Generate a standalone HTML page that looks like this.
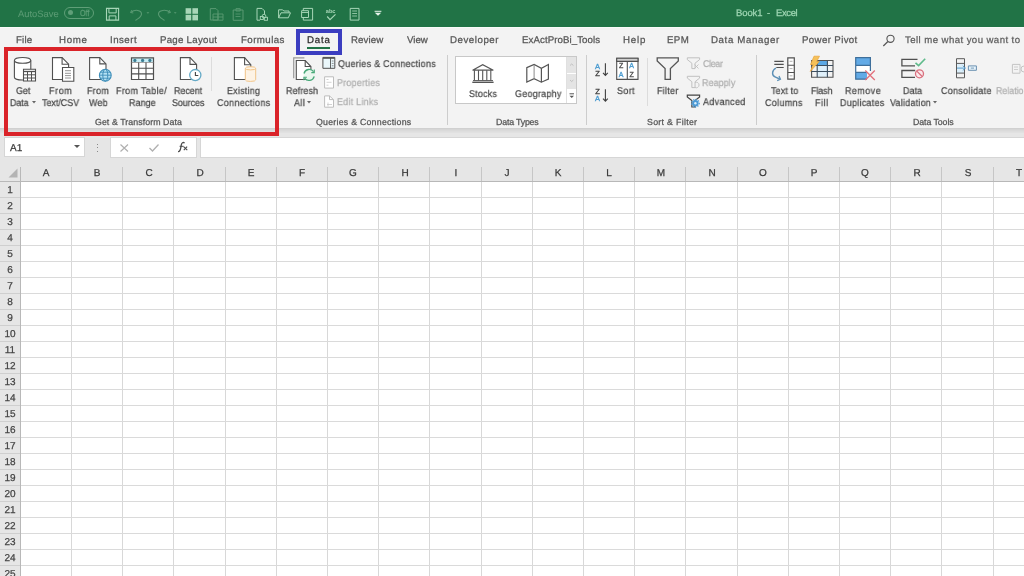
<!DOCTYPE html>
<html><head><meta charset="utf-8"><style>
html,body{margin:0;padding:0;}
body{width:1024px;height:576px;overflow:hidden;position:relative;background:#fff;font-family:"Liberation Sans", sans-serif;}
.t{position:absolute;white-space:nowrap;line-height:1;will-change:transform;text-rendering:geometricPrecision;-webkit-text-stroke:0.25px currentColor;}
.r{position:absolute;}
svg.r{overflow:visible;}
.dd{display:inline-block;width:0;height:0;border-left:2px solid transparent;border-right:2px solid transparent;border-top:2.5px solid #666;vertical-align:2px;}
</style></head><body>
<div class="r" style="left:0px;top:0px;width:1024px;height:27px;background:#217346;"></div>
<div class="r" style="left:0px;top:27px;width:1024px;height:101px;background:#f3f3f3;"></div>
<div class="r" style="left:0px;top:27px;width:1024px;height:1px;background:#f7fbf8;"></div>
<div class="r" style="left:0px;top:131px;width:1024px;height:50px;background:#e6e6e6;"></div>
<div class="r" style="left:0px;top:128px;width:1024px;height:1px;background:#d0d0d0;"></div>
<div class="r" style="left:0px;top:129px;width:1024px;height:1px;background:#d6d6d6;"></div>
<div class="r" style="left:0px;top:130px;width:1024px;height:1px;background:#dadada;"></div>
<div class="r" style="left:0px;top:131px;width:1024px;height:1px;background:#dedede;"></div>
<div class="r" style="left:0px;top:132px;width:1024px;height:1px;background:#e1e1e1;"></div>
<div class="r" style="left:20px;top:181px;width:1004px;height:395px;background:#ffffff;"></div>
<div class="r" style="left:0px;top:181px;width:20px;height:395px;background:#e6e6e6;"></div>
<div class="r" style="left:71px;top:167px;width:1px;height:14px;background:#c6c6c6;"></div>
<div class="r" style="left:71px;top:181px;width:1px;height:395px;background:#d8d8d8;"></div>
<div class="r" style="left:122px;top:167px;width:1px;height:14px;background:#c6c6c6;"></div>
<div class="r" style="left:122px;top:181px;width:1px;height:395px;background:#d8d8d8;"></div>
<div class="r" style="left:173px;top:167px;width:1px;height:14px;background:#c6c6c6;"></div>
<div class="r" style="left:173px;top:181px;width:1px;height:395px;background:#d8d8d8;"></div>
<div class="r" style="left:225px;top:167px;width:1px;height:14px;background:#c6c6c6;"></div>
<div class="r" style="left:225px;top:181px;width:1px;height:395px;background:#d8d8d8;"></div>
<div class="r" style="left:276px;top:167px;width:1px;height:14px;background:#c6c6c6;"></div>
<div class="r" style="left:276px;top:181px;width:1px;height:395px;background:#d8d8d8;"></div>
<div class="r" style="left:327px;top:167px;width:1px;height:14px;background:#c6c6c6;"></div>
<div class="r" style="left:327px;top:181px;width:1px;height:395px;background:#d8d8d8;"></div>
<div class="r" style="left:378px;top:167px;width:1px;height:14px;background:#c6c6c6;"></div>
<div class="r" style="left:378px;top:181px;width:1px;height:395px;background:#d8d8d8;"></div>
<div class="r" style="left:429px;top:167px;width:1px;height:14px;background:#c6c6c6;"></div>
<div class="r" style="left:429px;top:181px;width:1px;height:395px;background:#d8d8d8;"></div>
<div class="r" style="left:481px;top:167px;width:1px;height:14px;background:#c6c6c6;"></div>
<div class="r" style="left:481px;top:181px;width:1px;height:395px;background:#d8d8d8;"></div>
<div class="r" style="left:532px;top:167px;width:1px;height:14px;background:#c6c6c6;"></div>
<div class="r" style="left:532px;top:181px;width:1px;height:395px;background:#d8d8d8;"></div>
<div class="r" style="left:583px;top:167px;width:1px;height:14px;background:#c6c6c6;"></div>
<div class="r" style="left:583px;top:181px;width:1px;height:395px;background:#d8d8d8;"></div>
<div class="r" style="left:634px;top:167px;width:1px;height:14px;background:#c6c6c6;"></div>
<div class="r" style="left:634px;top:181px;width:1px;height:395px;background:#d8d8d8;"></div>
<div class="r" style="left:685px;top:167px;width:1px;height:14px;background:#c6c6c6;"></div>
<div class="r" style="left:685px;top:181px;width:1px;height:395px;background:#d8d8d8;"></div>
<div class="r" style="left:737px;top:167px;width:1px;height:14px;background:#c6c6c6;"></div>
<div class="r" style="left:737px;top:181px;width:1px;height:395px;background:#d8d8d8;"></div>
<div class="r" style="left:788px;top:167px;width:1px;height:14px;background:#c6c6c6;"></div>
<div class="r" style="left:788px;top:181px;width:1px;height:395px;background:#d8d8d8;"></div>
<div class="r" style="left:839px;top:167px;width:1px;height:14px;background:#c6c6c6;"></div>
<div class="r" style="left:839px;top:181px;width:1px;height:395px;background:#d8d8d8;"></div>
<div class="r" style="left:890px;top:167px;width:1px;height:14px;background:#c6c6c6;"></div>
<div class="r" style="left:890px;top:181px;width:1px;height:395px;background:#d8d8d8;"></div>
<div class="r" style="left:941px;top:167px;width:1px;height:14px;background:#c6c6c6;"></div>
<div class="r" style="left:941px;top:181px;width:1px;height:395px;background:#d8d8d8;"></div>
<div class="r" style="left:993px;top:167px;width:1px;height:14px;background:#c6c6c6;"></div>
<div class="r" style="left:993px;top:181px;width:1px;height:395px;background:#d8d8d8;"></div>
<div class="r" style="left:20px;top:167px;width:1px;height:409px;background:#b8b8b8;"></div>
<div class="r" style="left:0px;top:181px;width:1024px;height:1px;background:#b8b8b8;"></div>
<div class="r" style="left:0px;top:197px;width:20px;height:1px;background:#cfcfcf;"></div>
<div class="r" style="left:21px;top:197px;width:1003px;height:1px;background:#dadada;"></div>
<div class="r" style="left:0px;top:213px;width:20px;height:1px;background:#cfcfcf;"></div>
<div class="r" style="left:21px;top:213px;width:1003px;height:1px;background:#dadada;"></div>
<div class="r" style="left:0px;top:229px;width:20px;height:1px;background:#cfcfcf;"></div>
<div class="r" style="left:21px;top:229px;width:1003px;height:1px;background:#dadada;"></div>
<div class="r" style="left:0px;top:245px;width:20px;height:1px;background:#cfcfcf;"></div>
<div class="r" style="left:21px;top:245px;width:1003px;height:1px;background:#dadada;"></div>
<div class="r" style="left:0px;top:261px;width:20px;height:1px;background:#cfcfcf;"></div>
<div class="r" style="left:21px;top:261px;width:1003px;height:1px;background:#dadada;"></div>
<div class="r" style="left:0px;top:277px;width:20px;height:1px;background:#cfcfcf;"></div>
<div class="r" style="left:21px;top:277px;width:1003px;height:1px;background:#dadada;"></div>
<div class="r" style="left:0px;top:293px;width:20px;height:1px;background:#cfcfcf;"></div>
<div class="r" style="left:21px;top:293px;width:1003px;height:1px;background:#dadada;"></div>
<div class="r" style="left:0px;top:309px;width:20px;height:1px;background:#cfcfcf;"></div>
<div class="r" style="left:21px;top:309px;width:1003px;height:1px;background:#dadada;"></div>
<div class="r" style="left:0px;top:325px;width:20px;height:1px;background:#cfcfcf;"></div>
<div class="r" style="left:21px;top:325px;width:1003px;height:1px;background:#dadada;"></div>
<div class="r" style="left:0px;top:341px;width:20px;height:1px;background:#cfcfcf;"></div>
<div class="r" style="left:21px;top:341px;width:1003px;height:1px;background:#dadada;"></div>
<div class="r" style="left:0px;top:357px;width:20px;height:1px;background:#cfcfcf;"></div>
<div class="r" style="left:21px;top:357px;width:1003px;height:1px;background:#dadada;"></div>
<div class="r" style="left:0px;top:373px;width:20px;height:1px;background:#cfcfcf;"></div>
<div class="r" style="left:21px;top:373px;width:1003px;height:1px;background:#dadada;"></div>
<div class="r" style="left:0px;top:389px;width:20px;height:1px;background:#cfcfcf;"></div>
<div class="r" style="left:21px;top:389px;width:1003px;height:1px;background:#dadada;"></div>
<div class="r" style="left:0px;top:405px;width:20px;height:1px;background:#cfcfcf;"></div>
<div class="r" style="left:21px;top:405px;width:1003px;height:1px;background:#dadada;"></div>
<div class="r" style="left:0px;top:421px;width:20px;height:1px;background:#cfcfcf;"></div>
<div class="r" style="left:21px;top:421px;width:1003px;height:1px;background:#dadada;"></div>
<div class="r" style="left:0px;top:437px;width:20px;height:1px;background:#cfcfcf;"></div>
<div class="r" style="left:21px;top:437px;width:1003px;height:1px;background:#dadada;"></div>
<div class="r" style="left:0px;top:453px;width:20px;height:1px;background:#cfcfcf;"></div>
<div class="r" style="left:21px;top:453px;width:1003px;height:1px;background:#dadada;"></div>
<div class="r" style="left:0px;top:469px;width:20px;height:1px;background:#cfcfcf;"></div>
<div class="r" style="left:21px;top:469px;width:1003px;height:1px;background:#dadada;"></div>
<div class="r" style="left:0px;top:485px;width:20px;height:1px;background:#cfcfcf;"></div>
<div class="r" style="left:21px;top:485px;width:1003px;height:1px;background:#dadada;"></div>
<div class="r" style="left:0px;top:501px;width:20px;height:1px;background:#cfcfcf;"></div>
<div class="r" style="left:21px;top:501px;width:1003px;height:1px;background:#dadada;"></div>
<div class="r" style="left:0px;top:517px;width:20px;height:1px;background:#cfcfcf;"></div>
<div class="r" style="left:21px;top:517px;width:1003px;height:1px;background:#dadada;"></div>
<div class="r" style="left:0px;top:533px;width:20px;height:1px;background:#cfcfcf;"></div>
<div class="r" style="left:21px;top:533px;width:1003px;height:1px;background:#dadada;"></div>
<div class="r" style="left:0px;top:549px;width:20px;height:1px;background:#cfcfcf;"></div>
<div class="r" style="left:21px;top:549px;width:1003px;height:1px;background:#dadada;"></div>
<div class="r" style="left:0px;top:565px;width:20px;height:1px;background:#cfcfcf;"></div>
<div class="r" style="left:21px;top:565px;width:1003px;height:1px;background:#dadada;"></div>
<svg class="r" style="left:8px;top:168px;" width="10" height="10" viewBox="0 0 10 10"><path d="M9.5 0.5 L9.5 9.5 L0.5 9.5 Z" fill="#b4b4b4"/></svg>
<div class="t" style="top:168.73px;font-size:10px;color:#383838;left:-53.90px;width:200px;text-align:center;">A</div>
<div class="t" style="top:168.73px;font-size:10px;color:#383838;left:-2.70px;width:200px;text-align:center;">B</div>
<div class="t" style="top:168.73px;font-size:10px;color:#383838;left:48.50px;width:200px;text-align:center;">C</div>
<div class="t" style="top:168.73px;font-size:10px;color:#383838;left:99.70px;width:200px;text-align:center;">D</div>
<div class="t" style="top:168.73px;font-size:10px;color:#383838;left:150.90px;width:200px;text-align:center;">E</div>
<div class="t" style="top:168.73px;font-size:10px;color:#383838;left:202.10px;width:200px;text-align:center;">F</div>
<div class="t" style="top:168.73px;font-size:10px;color:#383838;left:253.30px;width:200px;text-align:center;">G</div>
<div class="t" style="top:168.73px;font-size:10px;color:#383838;left:304.50px;width:200px;text-align:center;">H</div>
<div class="t" style="top:168.73px;font-size:10px;color:#383838;left:355.70px;width:200px;text-align:center;">I</div>
<div class="t" style="top:168.73px;font-size:10px;color:#383838;left:406.90px;width:200px;text-align:center;">J</div>
<div class="t" style="top:168.73px;font-size:10px;color:#383838;left:458.10px;width:200px;text-align:center;">K</div>
<div class="t" style="top:168.73px;font-size:10px;color:#383838;left:509.30px;width:200px;text-align:center;">L</div>
<div class="t" style="top:168.73px;font-size:10px;color:#383838;left:560.50px;width:200px;text-align:center;">M</div>
<div class="t" style="top:168.73px;font-size:10px;color:#383838;left:611.70px;width:200px;text-align:center;">N</div>
<div class="t" style="top:168.73px;font-size:10px;color:#383838;left:662.90px;width:200px;text-align:center;">O</div>
<div class="t" style="top:168.73px;font-size:10px;color:#383838;left:714.10px;width:200px;text-align:center;">P</div>
<div class="t" style="top:168.73px;font-size:10px;color:#383838;left:765.30px;width:200px;text-align:center;">Q</div>
<div class="t" style="top:168.73px;font-size:10px;color:#383838;left:816.50px;width:200px;text-align:center;">R</div>
<div class="t" style="top:168.73px;font-size:10px;color:#383838;left:867.70px;width:200px;text-align:center;">S</div>
<div class="t" style="top:168.73px;font-size:10px;color:#383838;left:918.90px;width:200px;text-align:center;">T</div>
<div class="t" style="top:186.03px;font-size:10px;color:#444444;left:-90.00px;width:200px;text-align:center;">1</div>
<div class="t" style="top:202.03px;font-size:10px;color:#444444;left:-90.00px;width:200px;text-align:center;">2</div>
<div class="t" style="top:218.03px;font-size:10px;color:#444444;left:-90.00px;width:200px;text-align:center;">3</div>
<div class="t" style="top:234.03px;font-size:10px;color:#444444;left:-90.00px;width:200px;text-align:center;">4</div>
<div class="t" style="top:250.03px;font-size:10px;color:#444444;left:-90.00px;width:200px;text-align:center;">5</div>
<div class="t" style="top:266.04px;font-size:10px;color:#444444;left:-90.00px;width:200px;text-align:center;">6</div>
<div class="t" style="top:282.04px;font-size:10px;color:#444444;left:-90.00px;width:200px;text-align:center;">7</div>
<div class="t" style="top:298.04px;font-size:10px;color:#444444;left:-90.00px;width:200px;text-align:center;">8</div>
<div class="t" style="top:314.04px;font-size:10px;color:#444444;left:-90.00px;width:200px;text-align:center;">9</div>
<div class="t" style="top:330.04px;font-size:10px;color:#444444;left:-90.00px;width:200px;text-align:center;">10</div>
<div class="t" style="top:346.04px;font-size:10px;color:#444444;left:-90.00px;width:200px;text-align:center;">11</div>
<div class="t" style="top:362.04px;font-size:10px;color:#444444;left:-90.00px;width:200px;text-align:center;">12</div>
<div class="t" style="top:378.04px;font-size:10px;color:#444444;left:-90.00px;width:200px;text-align:center;">13</div>
<div class="t" style="top:394.04px;font-size:10px;color:#444444;left:-90.00px;width:200px;text-align:center;">14</div>
<div class="t" style="top:410.04px;font-size:10px;color:#444444;left:-90.00px;width:200px;text-align:center;">15</div>
<div class="t" style="top:426.04px;font-size:10px;color:#444444;left:-90.00px;width:200px;text-align:center;">16</div>
<div class="t" style="top:442.04px;font-size:10px;color:#444444;left:-90.00px;width:200px;text-align:center;">17</div>
<div class="t" style="top:458.04px;font-size:10px;color:#444444;left:-90.00px;width:200px;text-align:center;">18</div>
<div class="t" style="top:474.04px;font-size:10px;color:#444444;left:-90.00px;width:200px;text-align:center;">19</div>
<div class="t" style="top:490.04px;font-size:10px;color:#444444;left:-90.00px;width:200px;text-align:center;">20</div>
<div class="t" style="top:506.04px;font-size:10px;color:#444444;left:-90.00px;width:200px;text-align:center;">21</div>
<div class="t" style="top:522.03px;font-size:10px;color:#444444;left:-90.00px;width:200px;text-align:center;">22</div>
<div class="t" style="top:538.03px;font-size:10px;color:#444444;left:-90.00px;width:200px;text-align:center;">23</div>
<div class="t" style="top:554.03px;font-size:10px;color:#444444;left:-90.00px;width:200px;text-align:center;">24</div>
<div class="t" style="top:570.03px;font-size:10px;color:#444444;left:-90.00px;width:200px;text-align:center;">25</div>
<div class="r" style="left:4px;top:137px;width:81px;height:20px;background:#ffffff;box-sizing:border-box;border:1px solid #d6d6d6;"></div>
<div class="t" style="top:143.73px;font-size:10px;color:#3a3a3a;left:9.50px;">A1</div>
<svg class="r" style="left:74px;top:145px;" width="7" height="4" viewBox="0 0 7 4"><path d="M0 0 L6 0 L3 3 Z" fill="#555"/></svg>
<div class="r" style="left:97px;top:143.5px;width:1px;height:1px;background:#8a8a8a;"></div>
<div class="r" style="left:97px;top:147px;width:1px;height:1px;background:#8a8a8a;"></div>
<div class="r" style="left:97px;top:150.5px;width:1px;height:1px;background:#8a8a8a;"></div>
<div class="r" style="left:110px;top:137px;width:87px;height:21px;background:#ffffff;box-sizing:border-box;border:1px solid #d6d6d6;"></div>
<svg class="r" style="left:120px;top:144px;" width="9" height="8" viewBox="0 0 9 8"><path d="M0.5 0.5 L8 7.5 M8 0.5 L0.5 7.5" stroke="#b0b0b0" stroke-width="1.2" fill="none"/></svg>
<svg class="r" style="left:149px;top:144px;" width="10" height="8" viewBox="0 0 10 8"><path d="M0.5 4 L3.5 7 L9.5 0.5" stroke="#b0b0b0" stroke-width="1.3" fill="none"/></svg>
<svg class="r" style="left:0px;top:0px;" width="1" height="1" viewBox="0 0 1 1"><path d="M178 151.6 C179.6 151.8 180.3 150.4 180.8 147.6 L181.3 144.8 C181.8 142.7 183 142.1 184.6 142.8" stroke="#4a4a4a" stroke-width="1.3" fill="none"/><path d="M179.6 146.3 H183.6" stroke="#4a4a4a" stroke-width="1"/><path d="M183.6 146.6 L187.3 150.2 M187.1 146.6 L183.8 150.2" stroke="#4a4a4a" stroke-width="1.1" fill="none"/></svg>
<div class="r" style="left:200px;top:137px;width:824px;height:21px;background:#ffffff;box-sizing:border-box;border:1px solid #d6d6d6;border-right:none;"></div>
<div class="t" style="top:9.24px;font-size:9.4px;color:#5a9a73;letter-spacing:0.000px;left:18.30px;-webkit-text-stroke:0.1px currentColor;">AutoSave</div>
<div class="r" style="left:64px;top:6.5px;width:30px;height:12.5px;background:transparent;box-sizing:border-box;border:1px solid #5f9f78;border-radius:7px;"></div>
<div class="r" style="left:67.5px;top:10px;width:5px;height:5px;background:#5f9f78;border-radius:50%;"></div>
<div class="t" style="top:9.15px;font-size:8.8px;color:#5f9f78;letter-spacing:0.063px;left:79.80px;transform:scaleX(0.8);transform-origin:0 0;">Off</div>
<div class="t" style="top:8.86px;font-size:9.5px;color:#9fd6b3;letter-spacing:-0.100px;left:735.70px;">Book1</div>
<div class="t" style="top:8.86px;font-size:9.5px;color:#9fd6b3;letter-spacing:0.800px;left:767.00px;">-</div>
<div class="t" style="top:8.86px;font-size:9.5px;color:#9fd6b3;letter-spacing:-0.375px;left:776.10px;">Excel</div>
<div class="t" style="top:35.69px;font-size:9.7px;color:#565656;letter-spacing:0.167px;left:15.50px;">File</div>
<div class="t" style="top:35.69px;font-size:9.7px;color:#565656;letter-spacing:0.667px;left:58.80px;">Home</div>
<div class="t" style="top:35.69px;font-size:9.7px;color:#565656;letter-spacing:0.480px;left:109.70px;">Insert</div>
<div class="t" style="top:35.69px;font-size:9.7px;color:#565656;letter-spacing:0.260px;left:160.00px;">Page Layout</div>
<div class="t" style="top:35.69px;font-size:9.7px;color:#565656;letter-spacing:0.429px;left:240.60px;">Formulas</div>
<div class="t" style="top:35.69px;font-size:9.7px;color:#565656;letter-spacing:0.100px;left:351.30px;">Review</div>
<div class="t" style="top:35.69px;font-size:9.7px;color:#565656;letter-spacing:0.000px;left:407.00px;">View</div>
<div class="t" style="top:35.69px;font-size:9.7px;color:#565656;letter-spacing:0.538px;left:449.70px;">Developer</div>
<div class="t" style="top:35.69px;font-size:9.7px;color:#565656;letter-spacing:0.073px;left:521.70px;">ExActProBi_Tools</div>
<div class="t" style="top:35.69px;font-size:9.7px;color:#565656;letter-spacing:0.833px;left:623.00px;">Help</div>
<div class="t" style="top:35.69px;font-size:9.7px;color:#565656;letter-spacing:0.400px;left:666.90px;">EPM</div>
<div class="t" style="top:35.69px;font-size:9.7px;color:#565656;letter-spacing:0.618px;left:711.00px;">Data Manager</div>
<div class="t" style="top:35.69px;font-size:9.7px;color:#565656;letter-spacing:0.360px;left:801.90px;">Power Pivot</div>
<div class="t" style="top:35.59px;font-size:9.7px;color:#2a2a2a;letter-spacing:0.800px;left:306.70px;">Data</div>
<div class="r" style="left:307px;top:47px;width:23px;height:2px;background:#217346;"></div>
<div class="t" style="top:35.87px;font-size:9.6px;color:#5e5e5e;letter-spacing:0.435px;left:904.60px;">Tell me what you want to</div>
<div class="r" style="left:455px;top:56px;width:122px;height:48px;background:#ffffff;box-sizing:border-box;border:1px solid #c8c8c8;"></div>
<div class="r" style="left:567px;top:57px;width:9px;height:16px;background:#e4e4e4;"></div>
<div class="r" style="left:567px;top:74px;width:9px;height:15px;background:#e4e4e4;"></div>
<div class="r" style="left:566px;top:57px;width:1px;height:46px;background:#e0e0e0;"></div>
<div class="t" style="top:86.70px;font-size:9.8px;color:#4a4a4a;letter-spacing:-0.088px;left:16.10px;transform:scaleX(0.91);transform-origin:0 0;">Get</div>
<div class="t" style="top:98.70px;font-size:9.8px;color:#4a4a4a;letter-spacing:-0.110px;left:10.19px;transform:scaleX(0.91);transform-origin:0 0;">Data</div>
<svg class="r" style="left:32px;top:101.4px;" width="4" height="3" viewBox="0 0 4 3"><path d="M0 0 H4 L2 2.5 Z" fill="#666"/></svg>
<div class="t" style="top:86.70px;font-size:9.8px;color:#4a4a4a;letter-spacing:0.725px;left:48.79px;transform:scaleX(0.91);transform-origin:0 0;">From</div>
<div class="t" style="top:98.70px;font-size:9.8px;color:#4a4a4a;letter-spacing:-0.017px;left:41.80px;transform:scaleX(0.91);transform-origin:0 0;">Text/CSV</div>
<div class="t" style="top:86.70px;font-size:9.8px;color:#4a4a4a;letter-spacing:0.322px;left:86.99px;transform:scaleX(0.91);transform-origin:0 0;">From</div>
<div class="t" style="top:98.70px;font-size:9.8px;color:#4a4a4a;letter-spacing:0.275px;left:89.20px;transform:scaleX(0.91);transform-origin:0 0;">Web</div>
<div class="t" style="top:86.70px;font-size:9.8px;color:#4a4a4a;letter-spacing:0.416px;left:116.39px;transform:scaleX(0.91);transform-origin:0 0;">From Table/</div>
<div class="t" style="top:98.70px;font-size:9.8px;color:#4a4a4a;letter-spacing:0.088px;left:128.79px;transform:scaleX(0.91);transform-origin:0 0;">Range</div>
<div class="t" style="top:86.70px;font-size:9.8px;color:#4a4a4a;letter-spacing:-0.022px;left:174.29px;transform:scaleX(0.91);transform-origin:0 0;">Recent</div>
<div class="t" style="top:98.70px;font-size:9.8px;color:#4a4a4a;letter-spacing:-0.064px;left:171.89px;transform:scaleX(0.91);transform-origin:0 0;">Sources</div>
<div class="t" style="top:86.70px;font-size:9.8px;color:#4a4a4a;letter-spacing:0.262px;left:226.69px;transform:scaleX(0.91);transform-origin:0 0;">Existing</div>
<div class="t" style="top:98.70px;font-size:9.8px;color:#4a4a4a;letter-spacing:0.391px;left:216.50px;transform:scaleX(0.91);transform-origin:0 0;">Connections</div>
<div class="t" style="top:86.70px;font-size:9.8px;color:#4a4a4a;letter-spacing:0.141px;left:285.69px;transform:scaleX(0.91);transform-origin:0 0;">Refresh</div>
<div class="t" style="top:98.70px;font-size:9.8px;color:#4a4a4a;letter-spacing:0.544px;left:294.00px;transform:scaleX(0.91);transform-origin:0 0;">All</div>
<svg class="r" style="left:307.3px;top:101.4px;" width="4" height="3" viewBox="0 0 4 3"><path d="M0 0 H4 L2 2.5 Z" fill="#666"/></svg>
<div class="t" style="top:59.70px;font-size:9.8px;color:#4a4a4a;letter-spacing:0.329px;left:337.60px;transform:scaleX(0.91);transform-origin:0 0;">Queries &amp; Connections</div>
<div class="t" style="top:78.80px;font-size:9.8px;color:#b0b0b0;letter-spacing:0.264px;left:336.69px;transform:scaleX(0.91);transform-origin:0 0;">Properties</div>
<div class="t" style="top:98.10px;font-size:9.8px;color:#b0b0b0;letter-spacing:0.304px;left:336.69px;transform:scaleX(0.91);transform-origin:0 0;">Edit Links</div>
<div class="t" style="top:89.60px;font-size:9.8px;color:#4a4a4a;letter-spacing:0.246px;left:468.99px;transform:scaleX(0.91);transform-origin:0 0;">Stocks</div>
<div class="t" style="top:89.60px;font-size:9.8px;color:#4a4a4a;letter-spacing:0.305px;left:514.80px;transform:scaleX(0.91);transform-origin:0 0;">Geography</div>
<div class="t" style="top:86.70px;font-size:9.8px;color:#4a4a4a;letter-spacing:0.451px;left:617.39px;transform:scaleX(0.91);transform-origin:0 0;">Sort</div>
<div class="t" style="top:86.70px;font-size:9.8px;color:#4a4a4a;letter-spacing:0.327px;left:656.69px;transform:scaleX(0.91);transform-origin:0 0;">Filter</div>
<div class="t" style="top:59.70px;font-size:9.8px;color:#b0b0b0;letter-spacing:-0.368px;left:703.00px;transform:scaleX(0.91);transform-origin:0 0;">Clear</div>
<div class="t" style="top:78.70px;font-size:9.8px;color:#b0b0b0;letter-spacing:0.101px;left:702.09px;transform:scaleX(0.91);transform-origin:0 0;">Reapply</div>
<div class="t" style="top:98.00px;font-size:9.8px;color:#4a4a4a;letter-spacing:0.419px;left:703.00px;transform:scaleX(0.91);transform-origin:0 0;">Advanced</div>
<div class="t" style="top:86.70px;font-size:9.8px;color:#4a4a4a;letter-spacing:0.167px;left:771.20px;transform:scaleX(0.91);transform-origin:0 0;">Text to</div>
<div class="t" style="top:98.70px;font-size:9.8px;color:#4a4a4a;letter-spacing:0.405px;left:765.30px;transform:scaleX(0.91);transform-origin:0 0;">Columns</div>
<div class="t" style="top:86.70px;font-size:9.8px;color:#4a4a4a;letter-spacing:-0.091px;left:810.89px;transform:scaleX(0.91);transform-origin:0 0;">Flash</div>
<div class="t" style="top:98.70px;font-size:9.8px;color:#4a4a4a;letter-spacing:0.656px;left:815.29px;transform:scaleX(0.91);transform-origin:0 0;">Fill</div>
<div class="t" style="top:86.70px;font-size:9.8px;color:#4a4a4a;letter-spacing:0.538px;left:844.79px;transform:scaleX(0.91);transform-origin:0 0;">Remove</div>
<div class="t" style="top:98.70px;font-size:9.8px;color:#4a4a4a;letter-spacing:0.311px;left:840.39px;transform:scaleX(0.91);transform-origin:0 0;">Duplicates</div>
<div class="t" style="top:86.70px;font-size:9.8px;color:#4a4a4a;letter-spacing:0.073px;left:902.69px;transform:scaleX(0.91);transform-origin:0 0;">Data</div>
<div class="t" style="top:98.70px;font-size:9.8px;color:#4a4a4a;letter-spacing:0.278px;left:889.60px;transform:scaleX(0.91);transform-origin:0 0;">Validation</div>
<svg class="r" style="left:933.3px;top:101.4px;" width="4" height="3" viewBox="0 0 4 3"><path d="M0 0 H4 L2 2.5 Z" fill="#666"/></svg>
<div class="t" style="top:86.70px;font-size:9.8px;color:#4a4a4a;letter-spacing:0.362px;left:941.20px;transform:scaleX(0.91);transform-origin:0 0;">Consolidate</div>
<div class="t" style="top:86.70px;font-size:9.8px;color:#b0b0b0;left:995.80px;transform:scaleX(0.9);transform-origin:0 0;">Relationships</div>
<div class="t" style="top:117.75px;font-size:8.8px;color:#555555;letter-spacing:0.068px;left:94.70px;">Get &amp; Transform Data</div>
<div class="t" style="top:117.75px;font-size:8.8px;color:#555555;letter-spacing:0.235px;left:315.70px;">Queries &amp; Connections</div>
<div class="t" style="top:117.75px;font-size:8.8px;color:#555555;letter-spacing:-0.178px;left:496.00px;">Data Types</div>
<div class="t" style="top:117.75px;font-size:8.8px;color:#555555;letter-spacing:0.300px;left:646.50px;">Sort &amp; Filter</div>
<div class="t" style="top:117.75px;font-size:8.8px;color:#555555;letter-spacing:-0.078px;left:913.20px;">Data Tools</div>
<div class="r" style="left:447px;top:55px;width:1px;height:70px;background:#cdcdcd;"></div>
<div class="r" style="left:586px;top:55px;width:1px;height:70px;background:#cdcdcd;"></div>
<div class="r" style="left:756px;top:55px;width:1px;height:70px;background:#cdcdcd;"></div>
<div class="r" style="left:211px;top:57px;width:1px;height:34px;background:#dcdcdc;"></div>
<div class="r" style="left:647px;top:58px;width:1px;height:48px;background:#dcdcdc;"></div>
<svg class="r" style="left:0;top:0" width="1024" height="576" viewBox="0 0 1024 576"><path d="M14.4 60.4 V77.2 A8.2 2.8 0 0 0 30.8 77.2 V60.4" stroke="#505050" fill="#ffffff" stroke-width="1.1" /><ellipse cx="22.6" cy="60.4" rx="8.2" ry="2.9" stroke="#505050" fill="#ffffff" stroke-width="1.1"/><path d="M23.5 69.3 H35.5 V81 H23.5 Z" stroke="#505050" fill="#ffffff" stroke-width="1.1" /><path d="M23.5 71.5 H35.5" stroke="#505050" fill="none" stroke-width="1.3" /><path d="M27.5 71.5 V81 M31.5 71.5 V81 M23.5 74.8 H35.5 M23.5 78 H35.5" stroke="#505050" fill="none" stroke-width="1" /><path d="M52.5 57.6 H62.1 L68.6 64.2 V79.5 H52.5 Z" stroke="#505050" fill="#ffffff" stroke-width="1.1" /><path d="M62.1 57.6 V64.2 H68.6" stroke="#505050" fill="none" stroke-width="1.1" /><path d="M62.5 67.5 H73.8 V81.3 H62.5 Z" stroke="#505050" fill="#ffffff" stroke-width="1.1" /><path d="M65 70.7 H71 M65 73.3 H71 M65 75.6 H71 M65 78 H71" stroke="#8a8a8a" fill="none" stroke-width="0.9" /><path d="M89.6 57.6 H99.8 L106 63.9 V79.5 H89.6 Z" stroke="#505050" fill="#ffffff" stroke-width="1.1" /><path d="M99.8 57.6 V63.9 H106" stroke="#505050" fill="none" stroke-width="1.1" /><circle cx="105.3" cy="75.2" r="5.9" fill="#b5e2f4" stroke="none"/><ellipse cx="105.3" cy="75.2" rx="2.5" ry="5.9" fill="none" stroke="#3d8db8" stroke-width="1"/><path d="M99.6 75.2 H111 M100.4 72.2 H110.2 M100.4 78.2 H110.2" stroke="#3d8db8" fill="none" stroke-width="0.9" /><circle cx="105.3" cy="75.2" r="5.9" fill="none" stroke="#3d8db8" stroke-width="1.1"/><path d="M131.5 57.8 H153.5 V62.5 H131.5 Z" stroke="#505050" fill="#c9eef7" stroke-width="1.2" /><circle cx="134.9" cy="60.4" r="1.6" fill="#3c7d92"/><circle cx="142.6" cy="60.4" r="1.6" fill="#3c7d92"/><circle cx="149.9" cy="60.4" r="1.6" fill="#3c7d92"/><path d="M131.5 62.5 V79.5 H153.5 V62.5" stroke="#505050" fill="#ffffff" stroke-width="1.2" /><path d="M138.7 62.5 V79.5 M146 62.5 V79.5 M131.5 68.3 H153.5 M131.5 73.9 H153.5" stroke="#505050" fill="none" stroke-width="1.1" /><path d="M180.4 57.6 H190 L196.6 64.4 V79.5 H180.4 Z" stroke="#505050" fill="#ffffff" stroke-width="1.1" /><path d="M190 57.6 V64.4 H196.6" stroke="#505050" fill="none" stroke-width="1.1" /><circle cx="195.3" cy="75.1" r="5.6" fill="#ffffff" stroke="#64a9c6" stroke-width="1.3"/><path d="M195.4 72 V75.5 H198.3" stroke="#444" fill="none" stroke-width="1.1" /><path d="M234.4 57.6 H244.6 L250.8 64.7 V79.5 H234.4 Z" stroke="#505050" fill="#ffffff" stroke-width="1.1" /><path d="M244.6 57.6 V64.7 H250.8" stroke="#505050" fill="none" stroke-width="1.1" /><path d="M245.3 68.3 V79.8 A5.2 1.6 0 0 0 255.7 79.8 V68.3" stroke="#f1c488" fill="#fdf3e5" stroke-width="1" /><ellipse cx="250.5" cy="68.3" rx="5.2" ry="1.6" stroke="#f1c488" fill="#fdf3e5" stroke-width="1"/><path d="M293.7 78.2 V57.8 H304.4" stroke="#9a9a9a" fill="none" stroke-width="1.2" /><path d="M296.3 60.5 H305.2 L310.9 66.5 V79.5 H296.3 Z" stroke="#505050" fill="#ffffff" stroke-width="1.1" /><path d="M305.2 60.5 V66.5 H310.9" stroke="#505050" fill="none" stroke-width="1.1" /><circle cx="309.1" cy="74.9" r="5.6" fill="#e9f7ee" stroke="none"/><path d="M304 73.5 A5.4 5.4 0 0 1 313.6 71.6" stroke="#47a878" fill="none" stroke-width="1.3" /><path d="M314.2 76.3 A5.4 5.4 0 0 1 304.6 78.2" stroke="#47a878" fill="none" stroke-width="1.3" /><path d="M314.3 69.6 V72.6 H311.3" stroke="#47a878" fill="none" stroke-width="1.1" /><path d="M303.9 80.2 V77.2 H306.9" stroke="#47a878" fill="none" stroke-width="1.1" /><path d="M322.9 57.4 H334.8 V68.3 H322.9 Z" stroke="#505050" fill="#eaf7fb" stroke-width="1.0" /><path d="M322.9 58.1 H334.8" stroke="#505050" fill="none" stroke-width="1.4" /><path d="M330.5 58 V68.3" stroke="#505050" fill="none" stroke-width="0.9" /><path d="M331.8 61 H333.6 M331.8 63.4 H333.6 M331.8 65.8 H333.6" stroke="#777" fill="none" stroke-width="0.8" /><path d="M324.6 76.8 H333.5 V88.1 H324.6 Z" stroke="#bdbdbd" fill="#ffffff" stroke-width="1" /><path d="M326.5 79.5 H328.5 M326.5 82.3 H331.5 M326.5 85.2 H328.5" stroke="#c8c8c8" fill="none" stroke-width="0.8" /><path d="M324.6 95.9 H329.5 L333.5 99.6 V107.2 H324.6 Z" stroke="#bdbdbd" fill="#ffffff" stroke-width="1" /><path d="M329.5 95.9 V99.6 H333.5" stroke="#bdbdbd" fill="none" stroke-width="1" /><path d="M327 104.5 H332 M328 102.5 V106.5" stroke="#c8c8c8" fill="none" stroke-width="0.8" /><path d="M472.6 70.2 L482.7 64.7 L493.3 70.2 Z" stroke="#555555" fill="#ffffff" stroke-width="1.2" /><path d="M474.4 70.2 V80.4 M478.5 70.2 V80.4 M482.7 70.2 V80.4 M486.8 70.2 V80.4 M490.8 70.2 V80.4" stroke="#555555" fill="none" stroke-width="1.1" /><path d="M473 80.6 H493" stroke="#555555" fill="none" stroke-width="1" /><path d="M472.3 82.3 H493.6" stroke="#555555" fill="none" stroke-width="1.4" /><path d="M526.8 67.6 L534.1 64.5 L541.4 68.2 L548.4 64.5 V79.1 L541.4 82.2 L534.1 78.6 L526.8 82 Z" stroke="#555555" fill="#ffffff" stroke-width="1.2" /><path d="M534.1 64.8 V78.6" stroke="#8a8a8a" fill="none" stroke-width="1" /><path d="M541.4 68.2 V82.2" stroke="#555555" fill="none" stroke-width="1.2" /><path d="M570 65.5 L571.7 64 L573.4 65.5" stroke="#b8b8b8" fill="none" stroke-width="0.8" /><path d="M570 80 L571.7 81.5 L573.4 80" stroke="#b8b8b8" fill="none" stroke-width="0.8" /><path d="M569.5 93.8 H574" stroke="#555" fill="none" stroke-width="1" /><path d="M569.5 95.8 H574 L571.75 98 Z" stroke="none" fill="#555" stroke-width="1.1" /><text x="595.0" y="68.8" font-family="Liberation Sans" font-weight="normal" font-size="7.5" fill="#4a9bd0" stroke="#4a9bd0" stroke-width="0.35">A</text><text x="595.2" y="75.8" font-family="Liberation Sans" font-weight="normal" font-size="7.5" fill="#404040" stroke="#404040" stroke-width="0.35">Z</text><path d="M605.4 63.2 V75.2 M603 72.8 L605.4 75.4 L607.8 72.8" stroke="#404040" fill="none" stroke-width="1.1" /><text x="595.2" y="94.4" font-family="Liberation Sans" font-weight="normal" font-size="7.5" fill="#404040" stroke="#404040" stroke-width="0.35">Z</text><text x="595.0" y="101.4" font-family="Liberation Sans" font-weight="normal" font-size="7.5" fill="#4a9bd0" stroke="#4a9bd0" stroke-width="0.35">A</text><path d="M605.4 89.2 V101 M603 98.6 L605.4 101.2 L607.8 98.6" stroke="#404040" fill="none" stroke-width="1.1" /><path d="M616.7 58.2 H638 V79.4 H616.7 Z" stroke="#505050" fill="#ffffff" stroke-width="1.1" /><path d="M616.7 58.2 H638 V61.4 H616.7 Z" stroke="#505050" fill="#d0d0d0" stroke-width="1.1" /><path d="M627.3 61.4 V79.4" stroke="#505050" fill="none" stroke-width="1.1" /><text x="619.0" y="68.0" font-family="Liberation Sans" font-weight="normal" font-size="7.0" fill="#505050" stroke="#505050" stroke-width="0.35">Z</text><text x="618.8" y="77.0" font-family="Liberation Sans" font-weight="normal" font-size="7.0" fill="#4a9bd0" stroke="#4a9bd0" stroke-width="0.35">A</text><text x="629.2" y="68.0" font-family="Liberation Sans" font-weight="normal" font-size="7.0" fill="#4a9bd0" stroke="#4a9bd0" stroke-width="0.35">A</text><text x="629.4" y="77.0" font-family="Liberation Sans" font-weight="normal" font-size="7.0" fill="#505050" stroke="#505050" stroke-width="0.35">Z</text><path d="M657.2 57.8 H678.3 V61.0 L670.4 68.5 V79.4 H665.1 V68.5 L657.2 61.0 Z" stroke="#555" fill="none" stroke-width="1.3" /><path d="M687.3 57.8 H699.6 V59.599999999999994 L695.0500000000001 63.2 V68.6 H691.85 V63.2 L687.3 59.599999999999994 Z" stroke="#c0c0c0" fill="none" stroke-width="1" /><path d="M694.5 64.5 L698.5 68.5 M698.5 64.5 L694.5 68.5" stroke="#c0c0c0" fill="none" stroke-width="0.9" /><path d="M687.3 76.3 H699.6 V78.1 L695.0500000000001 81.7 V87.6 H691.85 V81.7 L687.3 78.1 Z" stroke="#c0c0c0" fill="none" stroke-width="1" /><path d="M695 82.5 A2.8 2.8 0 1 1 695 87.5" stroke="#c0c0c0" fill="none" stroke-width="0.9" /><path d="M687.3 95.2 H699.6 V97.0 L695.0500000000001 100.6 V107 H691.85 V100.6 L687.3 97.0 Z" stroke="#444" fill="none" stroke-width="1.2" /><circle cx="695.4" cy="103.2" r="3.2" fill="#4b9ad6"/><circle cx="695.4" cy="103.2" r="3.9" fill="none" stroke="#4b9ad6" stroke-width="1.1" stroke-dasharray="1.2 1.4"/><circle cx="695.4" cy="103.2" r="1.2" fill="#d8ecf9"/><path d="M774.3 61.3 H783.7 M774.3 64.4 H783.7 M776.3 67.5 H783.7" stroke="#505050" fill="none" stroke-width="1.2" /><path d="M776 68 C771.5 70.5 771.5 75.5 775.5 77.2 L779.8 79" stroke="#5b8fb5" fill="none" stroke-width="1.4" /><path d="M777.2 80.6 L780.5 79.2 L779 76" stroke="#5b8fb5" fill="none" stroke-width="1.2" /><path d="M787.8 57.8 H794.3 V79.2 H787.8 Z" stroke="#505050" fill="#ffffff" stroke-width="1.2" /><path d="M787.8 65.2 H794.3 M787.8 72.5 H794.3" stroke="#505050" fill="none" stroke-width="1.1" /><path d="M789.6 61.3 H792.5 M789.6 68.6 H792.5 M789.6 75.8 H792.5" stroke="#9a9a9a" fill="none" stroke-width="0.8" /><path d="M817.2 60.5 H827.4 V65.5 H817.2 Z" stroke="none" fill="#5aa8e6" stroke-width="1.1" /><path d="M817.2 65.5 H827.4 V77.2 H817.2 Z" stroke="none" fill="#dff0fb" stroke-width="1.1" /><path d="M811.6 60.5 H833 V77.2 H811.6 Z" stroke="#505050" fill="none" stroke-width="1.1" /><path d="M817.2 60.5 V77.2 M827.4 60.5 V77.2 M811.6 65.5 H833 M811.6 71.5 H833" stroke="#3c4f60" fill="none" stroke-width="1.1" /><path d="M814 56.2 H819.5 L816.6 61.6 H819.2 L810.3 71.5 L813.2 64.5 H810.5 Z" stroke="#e9a33a" fill="#f5c15a" stroke-width="0.7" /><path d="M855.7 57.7 H870.4 V65.3 H855.7 Z" stroke="none" fill="#62aae6" stroke-width="1.1" /><path d="M855.7 65.3 H870.4 V72.3 H855.7 Z" stroke="none" fill="#ffffff" stroke-width="1.1" /><path d="M855.7 72.3 H867 V79.2 H855.7 Z" stroke="none" fill="#62aae6" stroke-width="1.1" /><path d="M867 79.2 H855.7 V57.7 H870.4 V71 M855.7 65.3 H870.4 M855.7 72.3 H866.5" stroke="#3e6f9b" fill="none" stroke-width="1.2" /><path d="M865.3 70.5 L874.8 80 M874.8 70.5 L865.3 80" stroke="#e2707c" fill="none" stroke-width="1.3" /><path d="M917.5 59.3 H901.9 V65.8 H915" stroke="#505050" fill="none" stroke-width="1.3" /><path d="M915.5 62.8 L918.6 65.6 L925.2 58.8" stroke="#5fbb8b" fill="none" stroke-width="1.6" /><path d="M915.2 70.5 H901.9 V77.4 H915" stroke="#505050" fill="none" stroke-width="1.3" /><circle cx="919.5" cy="73.8" r="4" fill="#fbe9ec" stroke="#d9707e" stroke-width="1.3"/><path d="M916.8 71.1 L922.2 76.5" stroke="#d9707e" fill="none" stroke-width="1.3" /><path d="M956.5 63.4 H964.5 V73.1 H956.5 Z" stroke="none" fill="#dceffa" stroke-width="1.1" /><path d="M956.5 58.7 H964.5 V77.8 H956.5 Z M956.5 63.4 H964.5 M956.5 73.1 H964.5" stroke="#5a5a5a" fill="none" stroke-width="1.0" /><path d="M957 68.1 H965.2 M962.8 65.8 L965.4 68.1 L962.8 70.4" stroke="#5a9ccc" fill="none" stroke-width="1.0" /><path d="M968.4 65.9 H976.4 V70.3 H968.4 Z" stroke="#6a90b0" fill="#e6f3fb" stroke-width="1" /><path d="M970.8 68.1 H974" stroke="#6a90b0" fill="none" stroke-width="0.9" /><path d="M1012.4 64.4 H1020 V73.2 H1012.4 Z" stroke="#c4c4c4" fill="none" stroke-width="1" /><path d="M1014 67 H1018 M1014 69.5 H1018" stroke="#c4c4c4" fill="none" stroke-width="0.8" /><path d="M1024 66 A3 3 0 0 0 1024 72" stroke="#c4c4c4" fill="none" stroke-width="1" /><circle cx="890.5" cy="38.8" r="3.6" fill="none" stroke="#555" stroke-width="1.1"/><path d="M887.9 41.5 L883.3 46" stroke="#555" fill="none" stroke-width="1.2" /><path d="M106.5 8.4 H118.6 V20.1 H106.5 Z" stroke="#a7d6b7" fill="none" stroke-width="1.1" /><path d="M108.9 8.4 V12.9 H116.2 V8.4" stroke="#a7d6b7" fill="none" stroke-width="1" /><path d="M109.2 20.1 V15.9 H115.9 V20.1" stroke="#a7d6b7" fill="none" stroke-width="1" /><path d="M132 10 L130.5 12.5 L133.3 13" stroke="#5a9a73" fill="none" stroke-width="1" /><path d="M131 12.4 C135 9 141.5 10 141.5 14 C141.5 17 138 18.5 135.5 20.5" stroke="#5a9a73" fill="none" stroke-width="1.1" /><path d="M146.5 12.3 H149.3 L147.9 13.8 Z" stroke="none" fill="#5a9a73" stroke-width="1.1" /><path d="M169 10 L170.5 12.5 L167.7 13" stroke="#5a9a73" fill="none" stroke-width="1" /><path d="M170 12.4 C166 9 158.5 10 158.5 14 C158.5 17 162 18.5 164.5 20.5" stroke="#5a9a73" fill="none" stroke-width="1.1" /><path d="M173.8 12.3 H176.6 L175.2 13.8 Z" stroke="none" fill="#5a9a73" stroke-width="1.1" /><rect x="185.6" y="8.2" width="5.6" height="5.6" fill="#a7d6b7"/><rect x="192.4" y="8.2" width="5.6" height="5.6" fill="#a7d6b7"/><rect x="185.6" y="14.8" width="5.6" height="5.6" fill="#a7d6b7"/><rect x="192.4" y="14.8" width="5.6" height="5.6" fill="#a7d6b7"/><path d="M210.3 8.6 H216 L218 10.6 V20 H210.3 Z" stroke="#5a9a73" fill="none" stroke-width="1" /><path d="M213 14 H223 V20.2 H213 Z M213 17 H223 M218 14 V20.2" stroke="#5a9a73" fill="none" stroke-width="0.9" /><path d="M233.2 10 H243 V20.3 H233.2 Z" stroke="#5a9a73" fill="none" stroke-width="1" /><path d="M236 8.6 H240.2 V11 H236 Z" stroke="#5a9a73" fill="none" stroke-width="0.9" /><path d="M235.5 14 H240.5 M235.5 16.5 H240.5" stroke="#5a9a73" fill="none" stroke-width="0.8" /><path d="M257 8.4 H262 L264.5 10.9 V14 M257 8.4 V20.2 H260" stroke="#a7d6b7" fill="none" stroke-width="1" /><circle cx="264" cy="16.2" r="1.9" fill="none" stroke="#a7d6b7" stroke-width="0.9"/><rect x="260.3" y="16.5" width="3" height="3" fill="none" stroke="#a7d6b7" stroke-width="0.9"/><rect x="264.3" y="17.3" width="3.2" height="3" fill="none" stroke="#a7d6b7" stroke-width="0.9"/><path d="M278.6 17.8 V9.8 H282.6 L283.8 11 H289 V12.5" stroke="#a7d6b7" fill="none" stroke-width="1" /><path d="M278.6 17.8 L281 12.8 H290.5 L288.3 17.8 Z" stroke="#a7d6b7" fill="none" stroke-width="1" /><path d="M303.3 8.4 H312.6 V20.1 H303.3 Z" stroke="#a7d6b7" fill="none" stroke-width="1" /><path d="M301.6 10.7 H308.5 V17.5 H301.6 Z" stroke="#a7d6b7" fill="#217346" stroke-width="1" /><path d="M301.6 12.5 H308.5" stroke="#a7d6b7" fill="none" stroke-width="0.9" /><text x="325.8" y="13.3" font-family="Liberation Sans" font-weight="bold" font-size="5.6" fill="#a7d6b7">abc</text><path d="M327.2 16.5 L330 19.6 L335.5 14.4" stroke="#a7d6b7" fill="none" stroke-width="1.2" /><path d="M350.2 8.4 H359 V20.1 H350.2 Z" stroke="#a7d6b7" fill="none" stroke-width="1" /><path d="M352.2 11 H357 M352.2 13.5 H357 M352.2 16 H357" stroke="#a7d6b7" fill="none" stroke-width="0.8" /><path d="M374.6 11.3 H381.4" stroke="#e8f4ec" fill="none" stroke-width="1" /><path d="M374.8 12.8 H381.2 L378 15.8 Z" stroke="none" fill="#e8f4ec" stroke-width="1.1" /></svg>
<div class="r" style="left:3.5px;top:47px;width:275px;height:89px;background:transparent;box-sizing:border-box;border:4px solid #da2329;"></div>
<div class="r" style="left:295.5px;top:29px;width:46px;height:25.5px;background:transparent;box-sizing:border-box;border:4px solid #3b3dc0;"></div>
</body></html>
